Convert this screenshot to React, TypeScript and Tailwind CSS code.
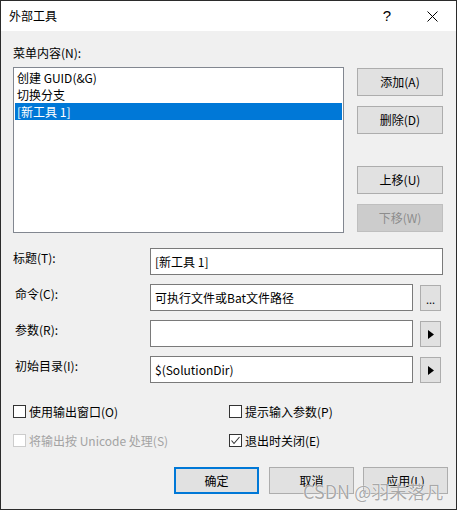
import React from "react";

type BtnProps = {
  label: string;
  disabled?: boolean;
  focused?: boolean;
  className?: string;
};

const Button = ({ label, disabled, focused, className = "" }: BtnProps) => {
  const tone = disabled
    ? "bg-[#cccccc] border border-[#bfbfbf] text-[#8d8d8d]"
    : focused
      ? "bg-[#e1e1e1] border-2 border-[#0078d7] text-black"
      : "bg-[#e1e1e1] border border-[#adadad] text-black";
  return (
    <div className={`flex items-center justify-center ${tone} ${className}`}>
      {label}
    </div>
  );
};

const Arrow = () => (
  <div className="ml-[7px] mt-[1px] flex h-[26px] w-[21px] items-center justify-center border border-[#adadad] bg-[#e1e1e1]">
    <svg width="6" height="9" viewBox="0 0 6 9">
      <polygon points="0,0 6,4.5 0,9" fill="#000" />
    </svg>
  </div>
);

type CheckProps = { label: string; checked?: boolean; disabled?: boolean };

const Check = ({ label, checked, disabled }: CheckProps) => (
  <div className="flex h-[13px] items-center">
    <div
      className={`flex h-[13px] w-[13px] items-center justify-center border bg-white ${
        disabled ? "border-[#cccccc]" : "border-[#333333]"
      }`}
    >
      {checked && (
        <svg width="11" height="11" viewBox="0 0 11 11">
          <polyline
            points="1.5,5.5 4,8.5 9.5,2"
            fill="none"
            stroke="#333"
            strokeWidth="1.1"
          />
        </svg>
      )}
    </div>
    <span className={`ml-[3px] whitespace-nowrap ${disabled ? "text-[#a3a3a3]" : "text-black"}`}>
      {label}
    </span>
  </div>
);

export default function App() {
  return (
    <div className="relative flex h-[510px] w-[457px] flex-col border border-[#2b2b2b] bg-[#f0f0f0] font-['Noto_Sans_CJK_SC',sans-serif] text-[12px] leading-[16px] text-black">
      {/* title bar */}
      <div className="flex h-[30px] items-center bg-white pl-[8px]">
        <span className="flex-1">外部工具</span>
        <span className="mr-[36px] font-['Liberation_Sans',sans-serif] text-[15px] leading-[16px]">?</span>
        <svg width="11" height="11" viewBox="0 0 11 11" className="mr-[18px]">
          <path d="M0.5 0.5 L10.5 10.5 M10.5 0.5 L0.5 10.5" stroke="#000" strokeWidth="1" />
        </svg>
      </div>

      <div className="flex flex-1 flex-col pl-[12px] pt-[14px]">
        {/* menu content */}
        <div className="flex">
          <div className="flex w-[331px] flex-col">
            <div className="mb-[6px] h-[16px]">菜单内容(N):</div>
            <div className="flex h-[166px] flex-col border border-[#828790] bg-white p-[1px]">
              <div className="flex h-[17px] items-center pl-[2px]">创建 GUID(&amp;G)</div>
              <div className="flex h-[17px] items-center pl-[2px]">切换分支</div>
              <div className="flex h-[17px] items-center bg-[#0078d7] pl-[2px] text-white">[新工具 1]</div>
            </div>
          </div>
          <div className="ml-[13px] flex w-[86px] flex-col pt-[23px]">
            <Button label="添加(A)" className="h-[28px]" />
            <Button label="删除(D)" className="mt-[10px] h-[28px]" />
            <Button label="上移(U)" className="mt-[32px] h-[28px]" />
            <Button label="下移(W)" disabled className="mt-[10px] h-[28px]" />
          </div>
        </div>

        {/* fields */}
        <div className="mt-[15px] flex flex-col gap-[9px]">
          <div className="flex h-[27px]">
            <div className="w-[137px] pt-[2px]">标题(T):</div>
            <div className="flex h-[27px] w-[293px] items-center border border-[#7a7a7a] bg-white pl-[4px]">[新工具 1]</div>
          </div>
          <div className="flex h-[27px]">
            <div className="w-[137px] pl-[2px] pt-[2px]">命令(C):</div>
            <div className="flex h-[27px] w-[263px] items-center border border-[#7a7a7a] bg-white pl-[4px]">可执行文件或Bat文件路径</div>
            <div className="ml-[7px] mt-[1px] flex h-[26px] w-[21px] items-end justify-center border border-[#adadad] bg-[#e1e1e1] pb-[6px] text-[11px] leading-[10px]">
              ...
            </div>
          </div>
          <div className="flex h-[27px]">
            <div className="w-[137px] pl-[2px] pt-[2px]">参数(R):</div>
            <div className="h-[27px] w-[263px] border border-[#7a7a7a] bg-white" />
            <Arrow />
          </div>
          <div className="flex h-[27px]">
            <div className="w-[137px] pl-[2px] pt-[2px]">初始目录(I):</div>
            <div className="flex h-[27px] w-[263px] items-center border border-[#7a7a7a] bg-white pl-[4px]">$(SolutionDir)</div>
            <Arrow />
          </div>
        </div>

        {/* options */}
        <div className="mt-[22px] grid grid-cols-[216px_1fr] gap-y-[16px]">
          <Check label="使用输出窗口(O)" />
          <Check label="提示输入参数(P)" />
          <Check label="将输出按 Unicode 处理(S)" disabled />
          <Check label="退出时关闭(E)" checked />
        </div>

        {/* dialog buttons */}
        <div className="mt-[20px] flex pl-[161px]">
          <Button label="确定" focused className="h-[27px] w-[85px]" />
          <Button label="取消" className="ml-[10px] h-[27px] w-[85px]" />
          <Button label="应用(L)" className="ml-[9px] h-[27px] w-[85px]" />
        </div>
      </div>

      <div className="pointer-events-none absolute left-[302px] top-[479px] whitespace-nowrap text-[18px] leading-[22px] text-[rgba(140,140,140,0.75)] [text-shadow:0_0_1px_#fff,0_0_1px_#fff]">
        CSDN @羽末落凡
      </div>
    </div>
  );
}
